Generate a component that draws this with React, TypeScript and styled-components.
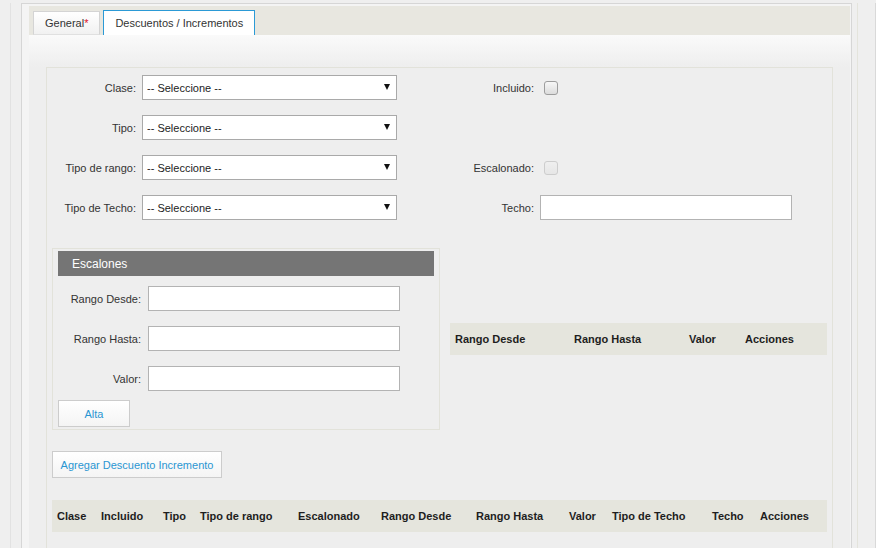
import React from 'react';
import styled, { createGlobalStyle } from 'styled-components';

const Global = createGlobalStyle`
  html, body { margin: 0; padding: 0; background: #efefef; }
  body { font-family: "Liberation Sans", Arial, sans-serif; font-size: 11px; color: #333; }
  *, *::before, *::after { box-sizing: border-box; }
`;

const Page = styled.div`
  width: 876px;
  height: 548px;
  overflow: hidden;
  padding-left: 10px;
`;

const Frame = styled.div`
  height: 100%;
  border-left: 1px solid #e2e2e2;
  border-right: 1px solid #d9d9d9;
  padding: 0 17px 0 10px;
`;

const Column = styled.div`
  height: 100%;
  border-right: 1px solid #e4e4dc;
  padding-right: 5px;
`;

const Panel = styled.div`
  margin-top: 3px;
  height: 100%;
  border: 1px solid #d6d6d6;
  border-bottom: none;
  background: #f4f4f4;
  padding: 2px 1px 0 7px;
  overflow: hidden;
`;

const Tabs = styled.div`
  height: 100%;
  display: flex;
  flex-direction: column;
`;

const TabNav = styled.div`
  flex-shrink: 0;
  height: 29px;
  background: #e8e7e0;
  display: flex;
  align-items: flex-end;
  gap: 3px;
  padding-left: 4px;
`;

const Tab = styled.div<{ $active?: boolean }>`
  height: ${(p) => (p.$active ? 25 : 24)}px;
  padding: 0 11px;
  display: flex;
  align-items: center;
  font-size: 11px;
  color: #333;
  border: 1px solid ${(p) => (p.$active ? '#2b9ad6' : '#d4d4d4')};
  border-bottom: ${(p) => (p.$active ? 'none' : '1px solid #e0e0e0')};
  background: ${(p) => (p.$active ? '#ffffff' : 'linear-gradient(#ffffff, #f1f1f1)')};
`;

const Req = styled.span`
  color: #e0112b;
`;

const Content = styled.div`
  flex: 1;
  min-height: 0;
  background: linear-gradient(#fafafa 0px, #eeeeee 32px, #eeeeee 100%);
  padding: 32px 17px 0 17px;
`;

const Fieldset = styled.div`
  border: 1px solid #e2e2da;
  border-bottom: none;
  padding: 7px 0 0 0;
  height: 600px;
`;

const FormGrid = styled.div`
  display: grid;
  grid-template-columns: 89px 255px 131px 252px;
  grid-auto-rows: 25px;
  column-gap: 6px;
  row-gap: 15px;
`;

const Label = styled.label`
  display: flex;
  align-items: center;
  justify-content: flex-end;
  white-space: nowrap;
  color: #333;
  font-size: 11px;
`;

const Cell = styled.div`
  display: flex;
  align-items: center;
`;

const SelectWrap = styled.div`
  position: relative;
  width: 100%;
  height: 25px;
`;

const Select = styled.select`
  appearance: none;
  -webkit-appearance: none;
  width: 100%;
  height: 25px;
  border: 1px solid #a9a9a9;
  border-radius: 0;
  background: #fff;
  font-family: "Liberation Sans", Arial, sans-serif;
  font-size: 11px;
  color: #222;
  padding: 0 0 0 4px;
  margin: 0;
  outline: none;
`;

const Arrow = styled.svg`
  position: absolute;
  right: 7px;
  top: 9px;
  pointer-events: none;
`;

const TextInput = styled.input<{ $w?: number }>`
  width: ${(p) => p.$w ?? 252}px;
  height: 25px;
  border: 1px solid #b3b3b3;
  background: #fff;
  margin: 0;
  padding: 0 4px;
  outline: none;
  font-family: "Liberation Sans", Arial, sans-serif;
  font-size: 11px;
`;

const Check = styled.span<{ $disabled?: boolean }>`
  display: inline-block;
  width: 14px;
  height: 14px;
  margin-left: 4px;
  border-radius: 3px;
  border: 1px solid ${(p) => (p.$disabled ? '#cdcdcd' : '#9d9d9d')};
  background: ${(p) =>
    p.$disabled ? 'linear-gradient(#efefef, #e6e6e6)' : 'linear-gradient(#f7f7f7, #dcdcdc)'};
`;

const SubSection = styled.div`
  display: flex;
  align-items: center;
  gap: 10px;
  margin: 28px 4px 0 5px;
`;

const EscBox = styled.div`
  width: 388px;
  border: 1px solid #e2e2da;
  padding: 2px 5px 2px 5px;
  display: flex;
  flex-direction: column;
`;

const EscHeader = styled.div`
  height: 25px;
  background: #757575;
  color: #fff;
  font-size: 12px;
  display: flex;
  align-items: center;
  padding-left: 14px;
`;

const EscGrid = styled.div`
  display: grid;
  grid-template-columns: 83px 252px;
  grid-auto-rows: 25px;
  column-gap: 7px;
  row-gap: 15px;
  margin-top: 10px;
`;

const Button = styled.button<{ $w: number }>`
  height: 27px;
  width: ${(p) => p.$w}px;
  padding: 0;
  border: 1px solid #cccccc;
  background: linear-gradient(#ffffff, #f4f4f4);
  color: #2a96d2;
  font-family: "Liberation Sans", Arial, sans-serif;
  font-size: 11px;
  margin: 0;
  cursor: pointer;
  text-align: center;
`;

const AltaButton = styled(Button)`
  margin-top: 9px;
`;

const AddRow = styled.div`
  margin: 21px 0 0 5px;
`;

const HeadTable = styled.table<{ $w: number }>`
  width: ${(p) => p.$w}px;
  table-layout: fixed;
  border-collapse: collapse;
  background: #e5e5dd;
`;

const Th = styled.th`
  height: 32px;
  padding: 0 0 0 5px;
  text-align: left;
  font-weight: bold;
  font-size: 11px;
  color: #1e1e1e;
  white-space: nowrap;
`;

const BottomTableWrap = styled.div`
  margin: 22px 0 0 5px;
`;

const SelectField = () => (
  <SelectWrap>
    <Select defaultValue="">
      <option value="">-- Seleccione --</option>
    </Select>
    <Arrow width="6" height="6" viewBox="0 0 6 6">
      <polygon points="0,0 6,0 3,6" fill="#111" />
    </Arrow>
  </SelectWrap>
);

const escCols = [119, 115, 56, 87];
const escHeads = ['Rango Desde', 'Rango Hasta', 'Valor', 'Acciones'];

const mainCols = [44, 62, 37, 98, 83, 95, 93, 43, 100, 48, 72];
const mainHeads = [
  'Clase',
  'Incluido',
  'Tipo',
  'Tipo de rango',
  'Escalonado',
  'Rango Desde',
  'Rango Hasta',
  'Valor',
  'Tipo de Techo',
  'Techo',
  'Acciones',
];

const sum = (a: number[]) => a.reduce((s, v) => s + v, 0);

export default function App() {
  return (
    <>
      <Global />
      <Page>
        <Frame>
          <Column>
            <Panel>
              <Tabs>
                <TabNav>
                  <Tab>
                    General<Req>*</Req>
                  </Tab>
                  <Tab $active>Descuentos / Incrementos</Tab>
                </TabNav>
                <Content>
                  <Fieldset>
                    <FormGrid>
                      <Label>Clase:</Label>
                      <Cell>
                        <SelectField />
                      </Cell>
                      <Label>Incluido:</Label>
                      <Cell>
                        <Check />
                      </Cell>

                      <Label>Tipo:</Label>
                      <Cell>
                        <SelectField />
                      </Cell>
                      <Label />
                      <Cell />

                      <Label>Tipo de rango:</Label>
                      <Cell>
                        <SelectField />
                      </Cell>
                      <Label>Escalonado:</Label>
                      <Cell>
                        <Check $disabled />
                      </Cell>

                      <Label>Tipo de Techo:</Label>
                      <Cell>
                        <SelectField />
                      </Cell>
                      <Label>Techo:</Label>
                      <Cell>
                        <TextInput $w={252} />
                      </Cell>
                    </FormGrid>

                    <SubSection>
                      <EscBox>
                        <EscHeader>Escalones</EscHeader>
                        <EscGrid>
                          <Label>Rango Desde:</Label>
                          <TextInput $w={252} />
                          <Label>Rango Hasta:</Label>
                          <TextInput $w={252} />
                          <Label>Valor:</Label>
                          <TextInput $w={252} />
                        </EscGrid>
                        <div>
                          <AltaButton $w={72}>Alta</AltaButton>
                        </div>
                      </EscBox>
                      <HeadTable $w={sum(escCols)}>
                        <colgroup>
                          {escCols.map((w, i) => (
                            <col key={i} style={{ width: w }} />
                          ))}
                        </colgroup>
                        <thead>
                          <tr>
                            {escHeads.map((h) => (
                              <Th key={h}>{h}</Th>
                            ))}
                          </tr>
                        </thead>
                      </HeadTable>
                    </SubSection>

                    <AddRow>
                      <Button $w={170}>Agregar Descuento Incremento</Button>
                    </AddRow>

                    <BottomTableWrap>
                      <HeadTable $w={sum(mainCols)}>
                        <colgroup>
                          {mainCols.map((w, i) => (
                            <col key={i} style={{ width: w }} />
                          ))}
                        </colgroup>
                        <thead>
                          <tr>
                            {mainHeads.map((h) => (
                              <Th key={h}>{h}</Th>
                            ))}
                          </tr>
                        </thead>
                      </HeadTable>
                    </BottomTableWrap>
                  </Fieldset>
                </Content>
              </Tabs>
            </Panel>
          </Column>
        </Frame>
      </Page>
    </>
  );
}
